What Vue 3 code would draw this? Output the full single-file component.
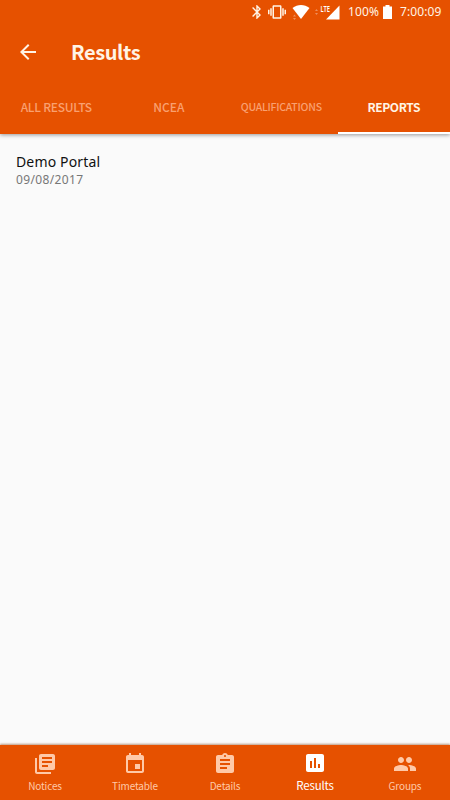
<script setup>
import { ref } from 'vue'

const activeTab = ref('reports')
const activeNav = ref('results')

const tabs = [
    { id: 'all', label: 'ALL RESULTS' },
    { id: 'ncea', label: 'NCEA' },
    { id: 'qualifications', label: 'QUALIFICATIONS' },
    { id: 'reports', label: 'REPORTS' }
]

const reports = [
    { id: 1, title: 'Demo Portal', date: '09/08/2017' }
]

const navItems = [
    {
        id: 'notices',
        label: 'Notices',
        icon: 'M4 6H2v14c0 1.100.9 2 2 2h14v-2H4V6zm16-4H8c-1.100 0-2 .9-2 2v12c0 1.100.9 2 2 2h12c1.100 0 2-.9 2-2V4c0-1.100-.9-2-2-2zm-1 9H9V9h10v2zm-4 4H9v-2h6v2zm4-8H9V5h10v2z'
    },
    {
        id: 'timetable',
        label: 'Timetable',
        icon: 'M17 12h-5v5h5v-5zM16 1v2H8V1H6v2H5c-1.110 0-2 .9-2 2v14c0 1.100.89 2 2 2h14c1.100 0 2-.9 2-2V5c0-1.100-.9-2-2-2h-1V1h-2zm3 18H5V8h14v11z'
    },
    {
        id: 'details',
        label: 'Details',
        icon: 'M19 3h-4.180C14.400 1.840 13.300 1 12 1s-2.400.84-2.820 2H5c-1.100 0-2 .9-2 2v14c0 1.100.9 2 2 2h14c1.100 0 2-.9 2-2V5c0-1.100-.9-2-2-2zm-7 0c.55 0 1 .45 1 1s-.45 1-1 1-1-.45-1-1 .45-1 1-1zm2 14H7v-2h7v2zm3-4H7v-2h10v2zm0-4H7V7h10v2z'
    },
    {
        id: 'results',
        label: 'Results',
        icon: 'M19 3H5c-1.100 0-2 .9-2 2v14c0 1.100.9 2 2 2h14c1.100 0 2-.9 2-2V5c0-1.100-.9-2-2-2zM9 17H7v-7h2v7zm4 0h-2V7h2v10zm4 0h-2v-4h2v4z'
    },
    {
        id: 'groups',
        label: 'Groups',
        icon: 'M16 11c1.660 0 2.990-1.340 2.990-3S17.660 5 16 5s-3 1.340-3 3 1.340 3 3 3zm-8 0c1.660 0 2.990-1.340 2.990-3S9.660 5 8 5 5 6.340 5 8s1.340 3 3 3zm0 2c-2.330 0-7 1.170-7 3.500V19h14v-2.500C15 14.170 10.330 13 8 13zm8 0c-.29 0-.62.02-.97.05 1.160.84 1.970 1.970 1.970 3.450V19h6v-2.500c0-2.330-4.670-3.500-7-3.500z'
    }
]
</script>

<template>
    <div class="screen">
        <header class="header">
            <div class="status-bar">
                <svg class="bluetooth" viewBox="5 2 14 20">
                    <path d="M17.700 7.700L12 2h-1v7.600L6.400 5 5 6.400 10.600 12 5 17.600 6.400 19l4.600-4.600V22h1l5.700-5.700L13.400 12l4.300-4.300zM13 5.800l1.900 1.900L13 9.600V5.800zm1.900 10.500L13 18.200v-3.800l1.900 1.900z" />
                </svg>
                <svg class="vibrate" viewBox="0 3 24 18">
                    <path d="M0 15h2V9H0v6zm3 2h2V7H3v10zm19-8v6h2V9h-2zm-3 8h2V7h-2v10zM16.500 3h-9C6.700 3 6 3.700 6 4.500v15c0 .8.7 1.500 1.500 1.500h9c.8 0 1.500-.7 1.500-1.500v-15c0-.8-.7-1.500-1.500-1.500zM16 19H8V5h8v14z" />
                </svg>
                <svg class="wifi" viewBox="0 0 19 16">
                    <path d="M.5 4C5.500 0 12.500 0 17.500 4L9 15z" />
                    <path class="faint" d="M1 12.500l1.500-2 1.500 2zM1 14h3l-1.500 2z" />
                </svg>
                <svg class="signal" viewBox="0 0 25 16">
                    <path d="M24.500 1.500v14H11z" />
                    <path class="faint" d="M0 7l1.500-2L3 7zM0 9h3l-1.500 2z" />
                    <text x="5.500" y="7.500" textLength="9.500" lengthAdjust="spacingAndGlyphs">LTE</text>
                </svg>
                <span class="percent">100%</span>
                <svg class="battery" viewBox="0 0 9 14">
                    <path d="M2.500 0h4v1.500H9V14H0V1.500h2.500z" />
                </svg>
                <span class="clock">7:00:09</span>
            </div>

            <div class="toolbar">
                <svg class="back" viewBox="4 4 16 16">
                    <path d="M20 11H7.830l5.590-5.590L12 4l-8 8 8 8 1.410-1.410L7.830 13H20v-2z" />
                </svg>
                <h1>Results</h1>
            </div>

            <nav class="tabs">
                <button
                    v-for="tab in tabs"
                    :key="tab.id"
                    :class="['tab', tab.id, { active: activeTab === tab.id }]"
                    @click="activeTab = tab.id"
                >
                    <span>{{ tab.label }}</span>
                </button>
            </nav>
        </header>

        <main class="content">
            <div v-for="report in reports" :key="report.id" class="report">
                <div class="title">{{ report.title }}</div>
                <div class="date">{{ report.date }}</div>
            </div>
        </main>

        <nav class="bottom-nav">
            <button
                v-for="item in navItems"
                :key="item.id"
                :class="['nav-item', item.id, { active: activeNav === item.id }]"
                @click="activeNav = item.id"
            >
                <svg viewBox="0 0 24 24"><path :d="item.icon" /></svg>
                <span>{{ item.label }}</span>
            </button>
        </nav>
    </div>
</template>

<style>
body {
    margin: 0;
}
</style>

<style scoped>
.screen {
    display: flex;
    flex-direction: column;
    width: 450px;
    height: 800px;
    overflow: hidden;
    background: #fafafa;
    font-family: "Noto Sans CJK SC", "Noto Sans", sans-serif;
}

svg {
    display: block;
    flex: none;
    fill: currentColor;
}

button {
    padding: 0;
    border: 0;
    background: none;
    font-family: inherit;
    white-space: nowrap;
}

.header {
    height: 134px;
    flex: none;
    background: #e65100;
    color: #fff4e5;
    box-shadow: 0 1px 4px rgba(0, 0, 0, 0.4);
}

.status-bar {
    display: flex;
    align-items: center;
    height: 24px;
    padding-left: 252px;
    font-family: "Noto Sans", sans-serif;
    font-size: 12px;
    line-height: 24px;
    white-space: nowrap;
}

.bluetooth {
    width: 10px;
    height: 14px;
}

.vibrate {
    width: 18px;
    height: 14px;
    margin-left: 6px;
}

.wifi {
    width: 19px;
    height: 16px;
    margin-left: 6px;
    color: #fff;
}

.signal {
    width: 25px;
    height: 16px;
    margin-left: 4px;
    overflow: visible;
    color: #fff;
}

.signal text {
    font-family: "Noto Sans", sans-serif;
    font-size: 8px;
    font-weight: 600;
}

.faint {
    opacity: 0.35;
}

.percent {
    width: 35px;
    margin-left: 8px;
    letter-spacing: 0.1px;
}

.battery {
    width: 9px;
    height: 14px;
    color: #fff;
}

.clock {
    margin-left: 8px;
    letter-spacing: 0.1px;
}

.toolbar {
    display: flex;
    align-items: center;
    height: 56px;
    padding-left: 20px;
}

.back {
    width: 16px;
    height: 16px;
}

h1 {
    margin: 0 0 0 35px;
    font-size: 20px;
    font-weight: 700;
    line-height: 24px;
    letter-spacing: -0.4px;
}

.tabs {
    display: grid;
    grid-template-columns: repeat(4, 1fr);
    height: 54px;
}

.tab {
    box-sizing: border-box;
    height: 54px;
    padding-top: 1px;
    border-bottom: 2px solid transparent;
    color: #f9a070;
    font-size: 12px;
    font-weight: 500;
    letter-spacing: -0.25px;
}

.tab.ncea {
    letter-spacing: 0;
}

.tab.qualifications {
    font-size: 10.5px;
}

.tab.active {
    border-bottom-color: #fff;
    color: #fff4e5;
    font-weight: 700;
    letter-spacing: -0.4px;
}

.content {
    flex: 1;
    padding: 18px 16px;
}

.title {
    color: #111;
    font-family: "Noto Sans", sans-serif;
    font-size: 14px;
    line-height: 19px;
    letter-spacing: 0.15px;
}

.date {
    color: #777;
    font-family: "Noto Sans", sans-serif;
    font-size: 12px;
    line-height: 17px;
    letter-spacing: 0.35px;
}

.bottom-nav {
    display: grid;
    grid-template-columns: repeat(5, 1fr);
    flex: none;
    height: 55px;
    background: #e65100;
    box-shadow: 0 -1px 2px rgba(120, 50, 0, 0.5);
}

.nav-item {
    display: flex;
    flex-direction: column;
    align-items: center;
    padding-top: 7px;
    color: #ffc9a8;
    font-size: 10px;
    line-height: 16px;
    letter-spacing: -0.15px;
}

.nav-item svg {
    width: 24px;
    height: 24px;
}

.nav-item span {
    margin-top: 2px;
}

.nav-item.active {
    padding-top: 6px;
    color: #fff;
    font-size: 11.500px;
    letter-spacing: -0.2px;
}
</style>
